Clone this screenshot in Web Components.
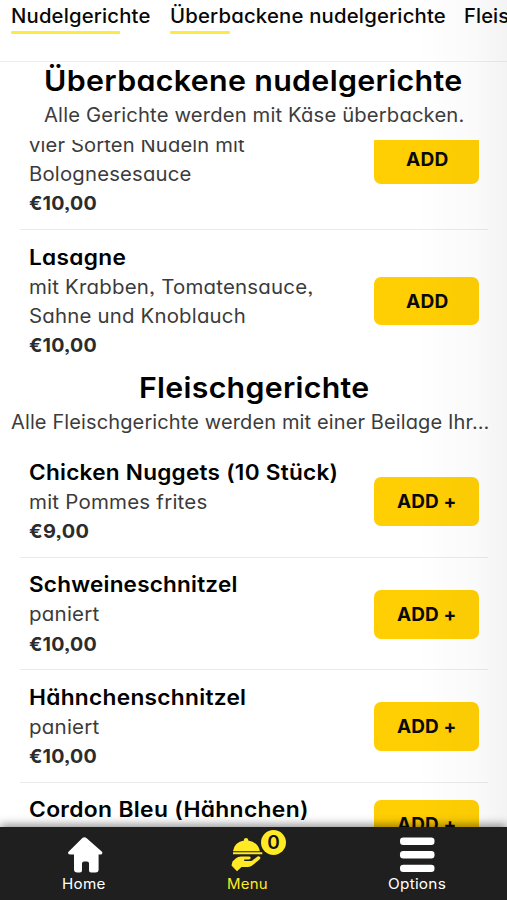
<!DOCTYPE html>
<html lang="de"><head><meta charset="utf-8"><title>Speisekarte</title>
<style>
html,body{margin:0;height:100%;overflow:hidden;background:#fff}
body{font-family:Inter,"Open Sans",sans-serif;font-feature-settings:"cv11","ss03"}
</style></head><body>
<menu-app>
 <category-tabs slot="tabs">
  <category-tab bar="109"><fit-text w="139.5">Nudelgerichte</fit-text></category-tab>
  <category-tab bar="60"><fit-text w="275.5">Überbackene nudelgerichte</fit-text></category-tab>
  <category-tab bar="0"><fit-text w="149">Fleischgerichte</fit-text></category-tab>
 </category-tabs>
 <section-title slot="sticky"><fit-text w="419">Überbackene nudelgerichte</fit-text><fit-text slot="sub" w="420">Alle Gerichte werden mit Käse überbacken.</fit-text></section-title>
 <menu-item add="ADD"><fit-text w="80">&nbsp;</fit-text><fit-text slot="desc" w="216">vier Sorten Nudeln mit</fit-text><fit-text slot="desc" w="163">Bolognesesauce</fit-text><fit-text slot="price" w="68">€10,00</fit-text></menu-item>
 <menu-item add="ADD" last><fit-text w="97">Lasagne</fit-text><fit-text slot="desc" w="284">mit Krabben, Tomatensauce,</fit-text><fit-text slot="desc" w="217">Sahne und Knoblauch</fit-text><fit-text slot="price" w="68">€10,00</fit-text></menu-item>
 <section-title wide><fit-text w="230">Fleischgerichte</fit-text><fit-text slot="sub" w="478">Alle Fleischgerichte werden mit einer Beilage Ihr…</fit-text></section-title>
 <menu-item add="ADD +"><fit-text w="309">Chicken Nuggets (10 Stück)</fit-text><fit-text slot="desc" w="178">mit Pommes frites</fit-text><fit-text slot="price" w="60">€9,00</fit-text></menu-item>
 <menu-item add="ADD +"><fit-text w="209">Schweineschnitzel</fit-text><fit-text slot="desc" w="71">paniert</fit-text><fit-text slot="price" w="68">€10,00</fit-text></menu-item>
 <menu-item add="ADD +"><fit-text w="217">Hähnchenschnitzel</fit-text><fit-text slot="desc" w="71">paniert</fit-text><fit-text slot="price" w="68">€10,00</fit-text></menu-item>
 <menu-item add="ADD +"><fit-text w="280">Cordon Bleu (Hähnchen)</fit-text><fit-text slot="price" w="68">€10,00</fit-text></menu-item>
 <bottom-nav slot="nav"></bottom-nav>
</menu-app>
<script>
const define=(name,html,ready)=>customElements.define(name,class extends HTMLElement{
  constructor(){super();this.attachShadow({mode:'open'}).innerHTML=html}
  connectedCallback(){if(ready)ready(this,this.shadowRoot)}
});

define('menu-app',`<style>
:host{position:relative;display:grid;grid-template-rows:61px 79px minmax(0,1fr) 73px;height:900px;width:507px;overflow:hidden;background:#fff}
header{border-bottom:1.5px solid #ededef;box-sizing:border-box;height:62px;overflow:hidden}
.head{padding-top:2px;box-sizing:border-box}
main{overflow:hidden;min-height:0}
.scroll{margin-top:-51.7px}
.shade{position:absolute;top:0;right:0;bottom:73px;width:90px;background:linear-gradient(90deg,#0000,#00000003 35%,#00000005 65%,#0000000c);pointer-events:none}
nav{position:relative;box-shadow:0 -2px 9px #0007}
</style><header><slot name="tabs"></slot></header><div class="head"><slot name="sticky"></slot></div><main><div class="scroll"><slot></slot></div></main><div class="shade"></div><nav><slot name="nav"></slot></nav>`);

define('category-tabs',`<style>:host{display:flex;gap:19px;padding:1px 0 0 11px;width:700px}</style><slot></slot>`);
define('category-tab',`<style>:host{display:flex;flex-direction:column;font-size:19.5px;font-weight:530;line-height:30px;color:#080808;flex:none}
i{display:block;height:2.5px;border-radius:1px;background:#fcea46}</style><slot></slot><i></i>`,
 (e,r)=>{r.querySelector('i').style.width=e.getAttribute('bar')+'px'});

define('section-title',`<style>:host{display:flex;flex-direction:column;align-items:center;height:75px}
h2{margin:0;font-size:29px;font-weight:640;line-height:36px;color:#000}
p{margin:0;font-size:19.5px;line-height:33px;color:#3c3c3c}
:host([wide]) p{align-self:flex-start;margin-left:11px}</style><h2><slot></slot></h2><p><slot name="sub"></slot></p>`);

define('menu-item',`<style>
:host{display:flex;align-items:center;justify-content:space-between;margin:0 19px 0 20px;padding:11.5px 9px 10.4px;border-bottom:1.5px solid #ebebeb}
:host([last]){border-color:transparent;padding-bottom:9px}
.text{display:flex;flex-direction:column}
h3{margin:0;font-size:21.5px;font-weight:630;line-height:31px;color:#000}
.desc{display:flex;flex-direction:column;font-size:19.5px;line-height:29.3px;color:#3b3b3b}
.price{font-size:19px;font-weight:700;line-height:29.3px;color:#2c2c2c}
button{border:0;padding:0 0 1px;width:105px;height:48.7px;border-radius:7px;background:#ffcf03;color:#0a0a0a;font:750 18.5px Inter,sans-serif;flex:none}
</style><div class="text"><h3><slot></slot></h3><div class="desc"><slot name="desc"></slot></div><div class="price"><slot name="price"></slot></div></div><button></button>`,
 (e,r)=>{const t=e.getAttribute('add');r.querySelector('button').innerHTML=`<fit-text w="${t==='ADD'?43:59}">${t}</fit-text>`});

define('bottom-nav',`<style>
:host{display:grid;grid-template-columns:167px 160px 180px;height:73px;background:#1f1f1f;color:#fff}
div{display:flex;flex-direction:column;align-items:center;font-size:14.2px;line-height:20px}
.menu{color:#ffea25;position:relative}
svg{display:block;height:47px;flex:none}
.badge{position:absolute;left:94px;top:3px;width:25px;height:25px;border-radius:50%;background:#ffea25;color:#111;font-size:19px;font-weight:600;line-height:26px;text-align:center}
</style>
<div><svg width="40" height="47" viewBox="0 0 40 47" fill="#fff"><path d="M18.4 11.6q2-1.9 4 0L38 25.3q1 1-.1 2.2-.5.6-1.8.6H34.600V43q0 3-3 3H27q-2 0-2-2v-7q0-2-2-2h-3q-2 0-2 2v7q0 2-2 2h-2.600q-3.400 0-3.400-3.300V28.100H7q-3-.1-3-1.600 0-.8.8-1.600Z" transform="translate(0 -.5)"/></svg><fit-text w="44">Home</fit-text></div>
<div class="menu"><svg width="40" height="47" viewBox="0 0 40 47" fill="#ffea25"><path d="M6 24.200Q7.500 15 17 13.500Q16.500 11 19 11T21.200 13.500Q31 15 33 24.200ZM6 25.200H35.300v2H6Z"/><path d="M5.500 34.500 9 31.200Q11 29.500 14 29.500H22Q24 29.500 23.600 31.200Q23.200 32.600 21.500 32.600H17.200V34H23.500Q25 34 26.500 32.500L30.500 29.600Q32 28.800 33 29.900T32.500 32.500L25.500 38.300Q23.500 40 21 40H14.500L10 44.200 4.500 38.500Z"/></svg><fit-text w="41">Menu</fit-text><span class="badge">0</span></div>
<div><svg width="40" height="47" viewBox="0 0 40 47" fill="#fff"><rect x="3" y="10.500" width="34.500" height="7.500" rx="3.300"/><rect x="3" y="24" width="34.500" height="7.500" rx="3.300"/><rect x="3" y="37.700" width="34.500" height="7.300" rx="3.300"/></svg><fit-text w="58">Options</fit-text></div>`);

/* Sets a line of text to the width given in "w": mostly wider letters, the rest as tracking. */
define('fit-text',`<style>:host{display:inline-block;white-space:nowrap;vertical-align:top}span{display:inline-block;transform-origin:0 50%}</style><span><slot></slot></span>`,
 (e,r)=>{const s=r.querySelector('span'),w=+e.getAttribute('w');e.style.width=w+'px';
  requestAnimationFrame(()=>{const n=s.offsetWidth;if(!n)return;
   const k=1+(w/n-1)*.7;
   s.style.letterSpacing=((w/k-n)/e.textContent.length)+'px';s.style.transform='scaleX('+k+')'})});
</script>
</body></html>
